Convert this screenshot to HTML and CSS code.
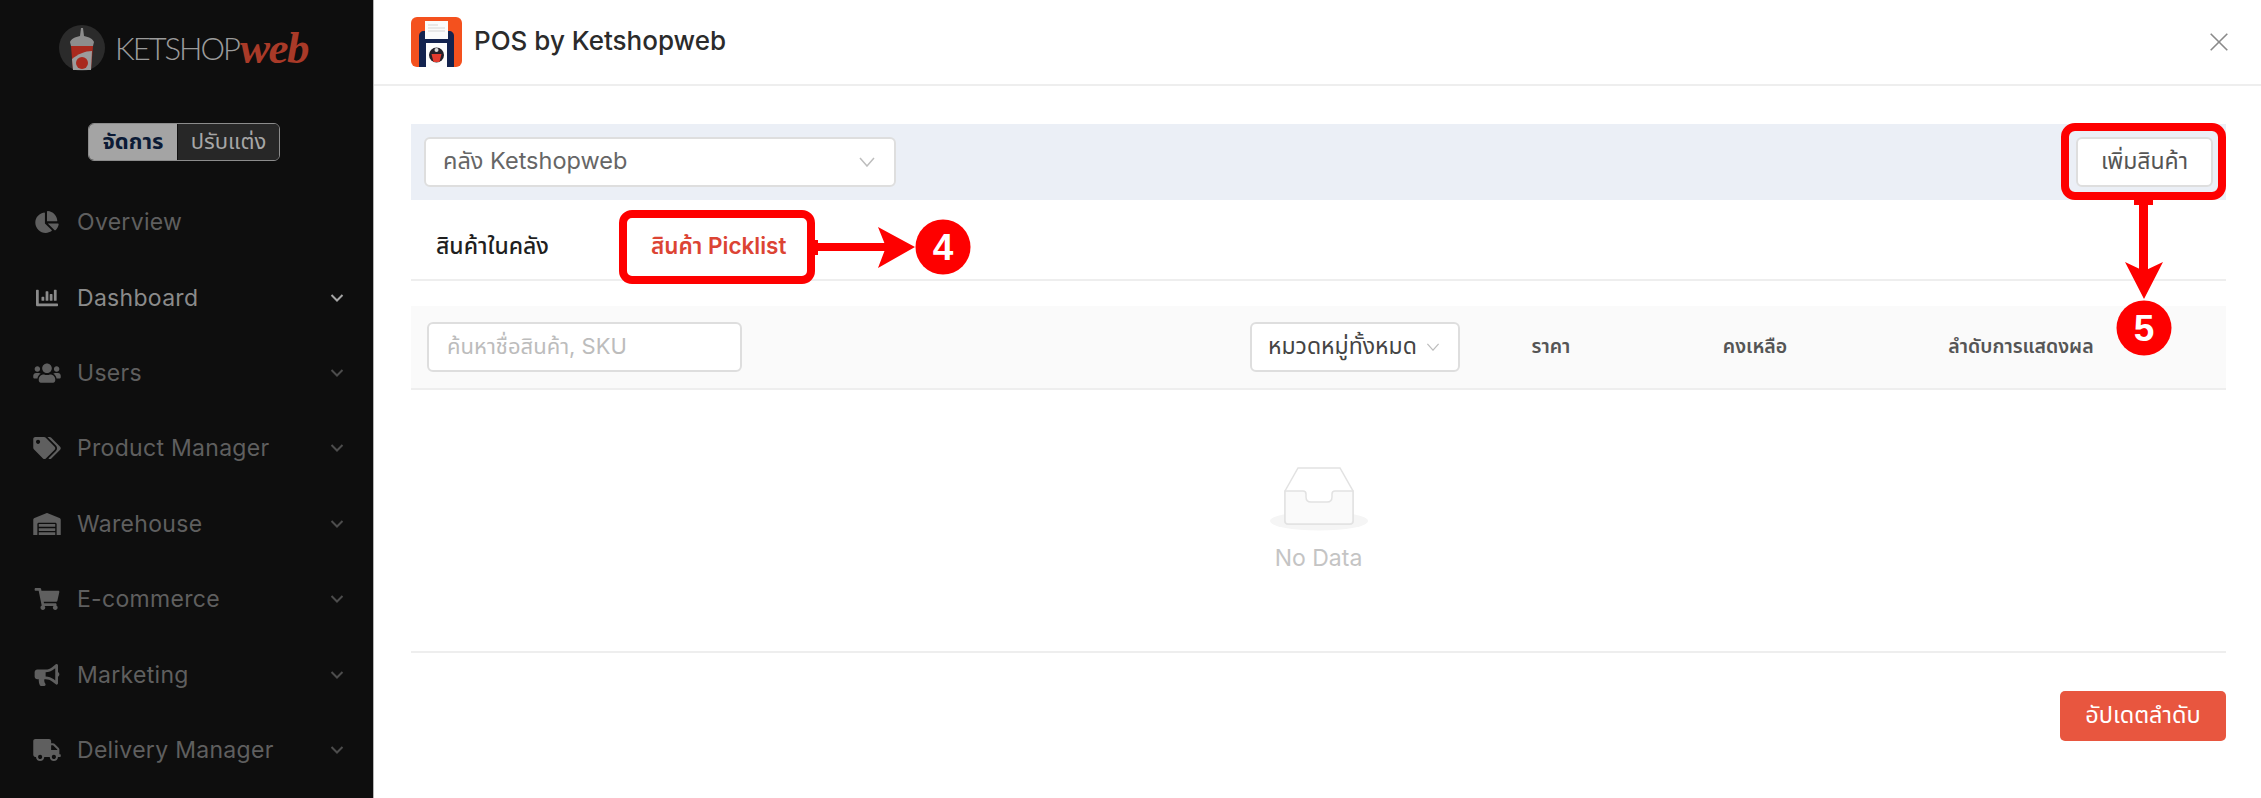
FILE: index.html
```html
<!DOCTYPE html>
<html lang="th">
<head>
<meta charset="utf-8">
<title>POS by Ketshopweb</title>
<link rel="stylesheet" href="styles.css">
</head>
<body>
<div class="page">
  <aside class="sidebar">
    <div class="brand">
      <svg class="brand-mark" viewBox="0 0 46 46">
        <circle cx="23" cy="23" r="23" fill="#2b2b2b"/>
        <path d="M22 3h2l1 8c5 1 9 3 10 6l-1 4H12l-1-4c1-3 5-5 10-6z" fill="#8d8d8d"/>
        <path d="M12 21h22l-2 24H14z" fill="#a92a1e"/>
        <path d="M13 34c6-5 13-8 20-8l-1 19H14z" fill="#9c9c9c"/>
        <circle cx="23" cy="38" r="6" fill="#a92a1e"/>
      </svg>
      <span class="brand-name">KETSHOP</span><span class="brand-web">web</span>
    </div>
    <div class="mode">
      <span class="mode-on">จัดการ</span><span class="mode-off">ปรับแต่ง</span>
    </div>
    <nav class="menu">
      <a class="item">
        <svg class="ico" viewBox="0 0 544 512"><path d="M527.79 288H290.5l158.03 158.03c6.04 6.04 15.98 6.53 22.19.68 38.7-36.46 65.32-85.61 73.13-140.86 1.34-9.46-6.51-17.85-16.06-17.85zm-15.83-64.8C503.72 103.74 408.26 8.28 288.8.04 279.68-.59 272 7.1 272 16.24V240h223.77c9.14 0 16.82-7.68 16.19-16.8zM224 288V50.71c0-9.55-8.39-17.4-17.84-16.06C86.99 51.49-4.1 155.6.14 280.37 4.5 408.51 114.83 513.59 243.03 511.98c50.4-.63 96.97-16.87 135.26-44.03 7.9-5.6 8.42-17.23 1.57-24.08L224 288z"/></svg>
        <span class="label">Overview</span>
      </a>
      <a class="item active">
        <svg class="ico" viewBox="0 0 512 512"><path d="M332.8 320h38.4c6.4 0 12.8-6.4 12.8-12.8V172.8c0-6.4-6.4-12.8-12.8-12.8h-38.4c-6.4 0-12.8 6.4-12.8 12.8v134.4c0 6.4 6.4 12.8 12.8 12.8zm96 0h38.4c6.4 0 12.8-6.4 12.8-12.8V76.8c0-6.4-6.4-12.8-12.8-12.8h-38.4c-6.4 0-12.8 6.4-12.8 12.8v230.4c0 6.4 6.4 12.8 12.8 12.8zm-288 0h38.4c6.4 0 12.8-6.4 12.8-12.8v-70.4c0-6.4-6.4-12.8-12.8-12.8h-38.4c-6.4 0-12.8 6.4-12.8 12.8v70.4c0 6.4 6.4 12.8 12.8 12.8zm96 0h38.4c6.4 0 12.8-6.4 12.8-12.8V108.8c0-6.4-6.4-12.8-12.8-12.8h-38.4c-6.4 0-12.8 6.4-12.8 12.8v198.4c0 6.4 6.4 12.8 12.8 12.8zM496 384H64V80c0-8.84-7.16-16-16-16H16C7.16 64 0 71.16 0 80v336c0 17.67 14.33 32 32 32h464c8.84 0 16-7.16 16-16v-32c0-8.84-7.16-16-16-16z"/></svg>
        <span class="label">Dashboard</span>
        <svg class="chev" viewBox="0 0 14 10"><path d="M1.5 2l5.5 5.5L12.5 2"/></svg>
      </a>
      <a class="item">
        <svg class="ico" viewBox="0 0 640 512"><path d="M96 224c35.3 0 64-28.7 64-64s-28.7-64-64-64-64 28.7-64 64 28.7 64 64 64zm448 0c35.3 0 64-28.7 64-64s-28.7-64-64-64-64 28.7-64 64 28.7 64 64 64zm32 32h-64c-17.6 0-33.5 7.1-45.1 18.6 40.3 22.1 68.9 62 75.1 109.4h66c17.7 0 32-14.3 32-32v-32c0-35.3-28.7-64-64-64zm-256 0c61.9 0 112-50.1 112-112S381.9 32 320 32 208 82.1 208 144s50.1 112 112 112zm76.8 32h-8.3c-20.8 10-43.9 16-68.5 16s-47.6-6-68.5-16h-8.3C179.6 288 128 339.6 128 403.2V432c0 26.5 21.5 48 48 48h288c26.5 0 48-21.5 48-48v-28.8c0-63.6-51.6-115.2-115.2-115.2zm-223.7-13.4C161.5 263.1 145.6 256 128 256H64c-35.3 0-64 28.7-64 64v32c0 17.7 14.3 32 32 32h65.9c6.3-47.4 34.9-87.3 75.2-109.4z"/></svg>
        <span class="label">Users</span>
        <svg class="chev" viewBox="0 0 14 10"><path d="M1.5 2l5.5 5.5L12.5 2"/></svg>
      </a>
      <a class="item">
        <svg class="ico" viewBox="0 0 640 512"><path d="M497.941 225.941L286.059 14.059A48 48 0 0 0 252.118 0H48C21.49 0 0 21.49 0 48v204.118a48 48 0 0 0 14.059 33.941l211.882 211.882c18.744 18.745 49.136 18.746 67.882 0l204.118-204.118c18.745-18.745 18.745-49.137 0-67.882zM112 160c-26.51 0-48-21.49-48-48s21.49-48 48-48 48 21.49 48 48-21.49 48-48 48zm513.941 133.823L421.823 497.941c-18.745 18.745-49.137 18.745-67.882 0l-.36-.36L527.64 323.522c16.999-16.999 26.36-39.6 26.36-63.64s-9.362-46.641-26.36-63.64L331.397 0h48.721a48 48 0 0 1 33.941 14.059l211.882 211.882c18.745 18.745 18.745 49.137 0 67.882z"/></svg>
        <span class="label">Product Manager</span>
        <svg class="chev" viewBox="0 0 14 10"><path d="M1.5 2l5.5 5.5L12.5 2"/></svg>
      </a>
      <a class="item">
        <svg class="ico" viewBox="0 0 640 512"><path d="M504 352H136.4c-4.4 0-8 3.6-8 8l-.1 48c0 4.4 3.6 8 8 8H504c4.4 0 8-3.6 8-8v-48c0-4.4-3.6-8-8-8zm0 96H136.1c-4.4 0-8 3.6-8 8l-.1 48c0 4.4 3.6 8 8 8h368c4.4 0 8-3.6 8-8v-48c0-4.4-3.6-8-8-8zm0-192H136.6c-4.4 0-8 3.6-8 8l-.1 48c0 4.4 3.6 8 8 8H504c4.4 0 8-3.6 8-8v-48c0-4.4-3.6-8-8-8zm106.5-139L338.4 3.7a48.15 48.15 0 0 0-36.9 0L29.5 117C11.7 124.5 0 141.9 0 161.3V504c0 4.4 3.6 8 8 8h80c4.4 0 8-3.6 8-8V256c0-17.6 14.6-32 32.6-32h382.8c18 0 32.6 14.4 32.6 32v248c0 4.4 3.6 8 8 8h80c4.4 0 8-3.6 8-8V161.3c0-19.4-11.7-36.8-29.5-44.3z"/></svg>
        <span class="label">Warehouse</span>
        <svg class="chev" viewBox="0 0 14 10"><path d="M1.5 2l5.5 5.5L12.5 2"/></svg>
      </a>
      <a class="item">
        <svg class="ico" viewBox="0 0 576 512"><path d="M528.12 301.319l47.273-208C578.806 78.301 567.391 64 551.99 64H159.208l-9.166-44.81C147.758 8.021 137.93 0 126.529 0H24C10.745 0 0 10.745 0 24v16c0 13.255 10.745 24 24 24h69.883l70.248 343.435C147.325 417.1 136 435.222 136 456c0 30.928 25.072 56 56 56s56-25.072 56-56c0-15.674-6.447-29.835-16.824-40h209.647C430.447 426.165 424 440.326 424 456c0 30.928 25.072 56 56 56s56-25.072 56-56c0-22.172-12.888-41.332-31.579-50.405l5.517-24.276c3.413-15.018-8.002-29.319-23.403-29.319H218.117l-6.545-32h293.145c11.206 0 20.92-7.754 23.403-18.681z"/></svg>
        <span class="label">E-commerce</span>
        <svg class="chev" viewBox="0 0 14 10"><path d="M1.5 2l5.5 5.5L12.5 2"/></svg>
      </a>
      <a class="item">
        <svg class="ico" viewBox="0 0 576 512"><path d="M576 240c0-23.63-12.95-44.04-32-55.12V32.01C544 23.26 537.02 0 512 0c-7.12 0-14.19 2.38-19.98 7.02l-85.03 68.03C364.28 109.19 310.66 128 256 128H64c-35.35 0-64 28.65-64 64v96c0 35.35 28.65 64 64 64h33.7c-1.39 10.48-2.18 21.14-2.18 32 0 39.77 9.26 77.35 25.56 110.94 5.19 10.69 16.52 17.06 28.4 17.06h74.28c26.05 0 41.69-29.84 25.9-50.56-16.4-21.52-26.15-48.36-26.15-77.44 0-11.11 1.62-21.79 4.41-32H256c54.66 0 108.28 18.81 150.98 52.95l85.03 68.03a32.023 32.023 0 0 0 19.98 7.02c24.92 0 32-22.78 32-32V295.13C563.05 284.04 576 263.63 576 240zm-96 141.42l-33.05-26.44C392.95 311.78 325.12 288 256 288v-96c69.12 0 136.95-23.78 190.95-66.98L480 98.58v282.84z"/></svg>
        <span class="label">Marketing</span>
        <svg class="chev" viewBox="0 0 14 10"><path d="M1.5 2l5.5 5.5L12.5 2"/></svg>
      </a>
      <a class="item">
        <svg class="ico" viewBox="0 0 640 512"><path d="M624 352h-16V243.9c0-12.7-5.1-24.9-14.1-33.9L494 110.1c-9-9-21.2-14.1-33.9-14.1H416V48c0-26.5-21.5-48-48-48H48C21.5 0 0 21.5 0 48v320c0 26.5 21.5 48 48 48h16c0 53 43 96 96 96s96-43 96-96h128c0 53 43 96 96 96s96-43 96-96h48c8.8 0 16-7.2 16-16v-32c0-8.8-7.2-16-16-16zM160 464c-26.5 0-48-21.5-48-48s21.5-48 48-48 48 21.5 48 48-21.5 48-48 48zm320 0c-26.5 0-48-21.5-48-48s21.5-48 48-48 48 21.5 48 48-21.5 48-48 48zm80-208H416V144h44.1l99.9 99.9V256z"/></svg>
        <span class="label">Delivery Manager</span>
        <svg class="chev" viewBox="0 0 14 10"><path d="M1.5 2l5.5 5.5L12.5 2"/></svg>
      </a>
    </nav>
  </aside>

  <main class="panel">
    <header class="head">
      <svg class="pos-logo" viewBox="0 0 51 50">
        <rect width="51" height="50" rx="6" fill="#f4511e"/>
        <path d="M8 50V19c0-3 2-5 5-5h25c3 0 5 2 5 5v31z" fill="#13234f"/>
        <rect x="14" y="4" width="23" height="18" fill="#fbfbfb"/>
        <path d="M17 8h10M17 11h17M17 14h17" stroke="#d5d5d5" stroke-width="1"/>
        <rect x="15" y="26" width="21" height="24" fill="#fdfdfd"/>
        <circle cx="25.500" cy="38" r="7.500" fill="#23212a"/>
        <path d="M20.500 37h10l-2 8h-6z" fill="#e23b2e"/>
        <circle cx="25.500" cy="33" r="2" fill="#d8d8d8"/>
      </svg>
      <h1 class="title">POS by Ketshopweb</h1>
      <svg class="close" viewBox="0 0 18 18"><path d="M.7.7l16.600 16.600M17.300.7L.7 17.300"/></svg>
    </header>

    <div class="content">
      <div class="toolbar">
        <div class="field wh-select">
          <span>คลัง Ketshopweb</span>
          <svg class="caret" viewBox="0 0 16 10"><path d="M1 1l7 8 7-8"/></svg>
        </div>
        <button class="add-btn">เพิ่มสินค้า</button>
      </div>

      <div class="tabs">
        <span class="tab">สินค้าในคลัง</span>
        <span class="tab tab-on">สินค้า Picklist</span>
      </div>

      <div class="thead">
        <div class="field search">ค้นหาชื่อสินค้า, SKU</div>
        <div class="field cat">
          <span>หมวดหมู่ทั้งหมด</span>
          <svg class="caret" viewBox="0 0 16 10"><path d="M1 1l7 8 7-8"/></svg>
        </div>
        <span class="col col-price">ราคา</span>
        <span class="col col-stock">คงเหลือ</span>
        <span class="col col-order">ลำดับการแสดงผล</span>
      </div>

      <div class="empty">
        <svg class="empty-ico" viewBox="0 0 98 64">
          <ellipse cx="49" cy="54" rx="49" ry="9.500" fill="#f5f5f5"/>
          <path d="M15 24L28 1h42l13 23v30c0 2-1 3-3 3H18c-2 0-3-1-3-3z" fill="#fff" stroke="#e2e2e2" stroke-width="1.500"/>
          <path d="M15 24h18c2 0 3 1 3 3v3c0 3 2 5 5 5h16c3 0 5-2 5-5v-3c0-2 1-3 3-3h18v30c0 2-1 3-3 3H18c-2 0-3-1-3-3z" fill="#fafafa" stroke="#e2e2e2" stroke-width="1.500"/>
        </svg>
        <p class="empty-text">No Data</p>
      </div>

      <div class="foot">
        <button class="save-btn">อัปเดตลำดับ</button>
      </div>
    </div>
  </main>

  <svg class="marks" viewBox="0 0 2261 798" width="2261" height="798">
    <g fill="none" stroke="#fe0000" stroke-width="8">
      <rect x="623" y="214" width="188" height="66" rx="9"/>
      <rect x="2065" y="127" width="157" height="69" rx="10"/>
    </g>
    <g fill="#fe0000">
      <rect x="814" y="240" width="4" height="15"/>
      <rect x="816" y="243" width="70" height="8"/>
      <path d="M878 227l37 20-37 21 8-21z"/>
      <circle cx="943" cy="247" r="27.500"/>
      <rect x="2134" y="200" width="19" height="5"/>
      <rect x="2139" y="203" width="9" height="68"/>
      <path d="M2125 262l19 9 19-9-19 37z"/>
      <circle cx="2144" cy="328" r="27.500"/>
    </g>
    <g class="mark-num">
      <text x="943" y="260">4</text>
      <text x="2144" y="341">5</text>
    </g>
  </svg>
</div>
</body>
</html>
```
FILE: styles.css
```css
* { box-sizing: border-box; }
html, body { margin: 0; height: 100%; background: #fff; overflow: hidden; }
body {
  font-family: "Inter", "Noto Sans Thai", "Noto Sans", "Noto Sans CJK SC", sans-serif;
  color: #333;
}
.page { display: flex; width: 2261px; height: 798px; position: relative; }

.sidebar {
  width: 374px;
  flex: none;
  background: #0e0e0e;
  border-right: 1px solid #b5b5b5;
  display: flex;
  flex-direction: column;
  align-items: center;
}
.brand { display: flex; align-items: center; height: 46px; margin-top: 25px; align-self: flex-start; padding-left: 59px; }
.brand-mark { width: 46px; height: 46px; flex: none; }
.brand-name { font-family: "Lato", sans-serif; font-weight: 300; font-size: 31px; color: #9b9b9b; margin-left: 10px; letter-spacing: -2px; }
.brand-web { font-family: "Liberation Serif", serif; font-style: italic; font-weight: 700; font-size: 45px; line-height: 40px; color: #a93a28; margin-left: 1px; letter-spacing: -1.500px; }

.mode { display: flex; margin: 52px 5px 0 0; height: 38px; width: 192px; border: 1px solid #8c8c8c; border-radius: 6px; overflow: hidden; font-size: 22px; }
.mode-on { width: 88px; background: #a4a4a4; color: #0c1b36; font-weight: 700; display: flex; align-items: center; justify-content: center; }
.mode-off { flex: 1; background: #272727; color: #a6a6a6; display: flex; align-items: center; justify-content: center; border-left: 1px solid #111; }

.menu { align-self: stretch; display: flex; flex-direction: column; margin-top: 23.500px; }
.item { height: 75.400px; display: flex; align-items: center; position: relative; padding-left: 33px; color: #5f5f5f; flex: none; }
.item.active { color: #8b8b8b; }
.ico { height: 22px; width: 28px; flex: none; fill: currentColor; }
.label { margin-left: 16px; font-size: 23px; letter-spacing: .3px; flex: 1; }
.chev { width: 14px; height: 10px; margin-right: 29px; fill: none; stroke: #4c4c4c; stroke-width: 2; }
.active .chev { stroke: #a5a5a5; }

.panel { flex: 1; min-width: 0; display: flex; flex-direction: column; }
.head { height: 86px; border-bottom: 2px solid #eee; display: flex; align-items: center; padding: 0 33px 0 37px; flex: none; }
.pos-logo { width: 51px; height: 50px; flex: none; }
.title { font-size: 26px; font-weight: 500; color: #2b2b2b; margin: 0 0 3px 12px; flex: 1; }
.close { width: 18px; height: 18px; fill: none; stroke: #8a8a8a; stroke-width: 1.600; margin-bottom: 1px; }

.content { padding: 38px 35px 0 37px; display: flex; flex-direction: column; flex: 1; }
.toolbar { height: 76px; background: #ebeff6; display: flex; align-items: center; justify-content: space-between; padding: 0 13px; flex: none; }
.field { background: #fff; border: 2px solid #dedede; border-radius: 6px; height: 50px; display: flex; align-items: center; font-size: 22px; }
.wh-select { width: 472px; padding: 0 19px 0 17px; justify-content: space-between; color: #666; font-size: 23.500px; }
.caret { width: 16px; height: 10px; fill: none; stroke: #bdbdbd; stroke-width: 1.500; flex: none; }
.add-btn { width: 137px; height: 50px; background: #fff; border: 2px solid #dedede; border-radius: 6px; font: inherit; font-size: 23px; color: #555; padding: 0; }

.tabs { height: 81px; display: flex; align-items: center; border-bottom: 2px solid #eee; flex: none; padding-top: 14px; }
.tab { font-size: 23px; font-weight: 500; color: #1f1f1f; margin-left: 25px; }
.tab-on { color: #dc4434; margin-left: 102px; font-weight: 600; font-size: 22.500px; }

.thead { margin-top: 25px; height: 84px; background: #fafafa; border-bottom: 2px solid #eee; display: flex; align-items: center; padding-left: 16px; flex: none; position: relative; }
.search { width: 315px; padding-left: 18px; color: #bcbcbc; }
.cat { width: 210px; margin-left: 508px; padding: 0 18px 0 16px; justify-content: space-between; color: #444; font-size: 23px; }
.cat .caret { width: 14px; height: 8px; }
.col { font-size: 19.500px; font-weight: 600; color: #555; text-align: center; flex: none; }
.col-price { width: 200px; margin-left: -9px; }
.col-stock { width: 200px; margin-left: 4px; }
.col-order { width: 300px; margin-left: 16px; }

.empty { height: 263px; border-bottom: 2px solid #eee; display: flex; flex-direction: column; align-items: center; flex: none; padding-top: 77px; }
.empty-ico { width: 98px; height: 64px; flex: none; }
.empty-text { margin: 13px 0 0; font-size: 23px; color: #c4c4c4; }

.foot { display: flex; justify-content: flex-end; padding-top: 38px; }
.save-btn { width: 166px; height: 50px; border: 0; border-radius: 5px; background: #e8563f; color: #fff; font: inherit; font-size: 23.500px; padding: 0; }

.marks { position: absolute; left: 0; top: 0; pointer-events: none; }
.mark-num text { font-family: "Liberation Sans", sans-serif; font-weight: 700; font-size: 37px; fill: #fff; text-anchor: middle; }
```
